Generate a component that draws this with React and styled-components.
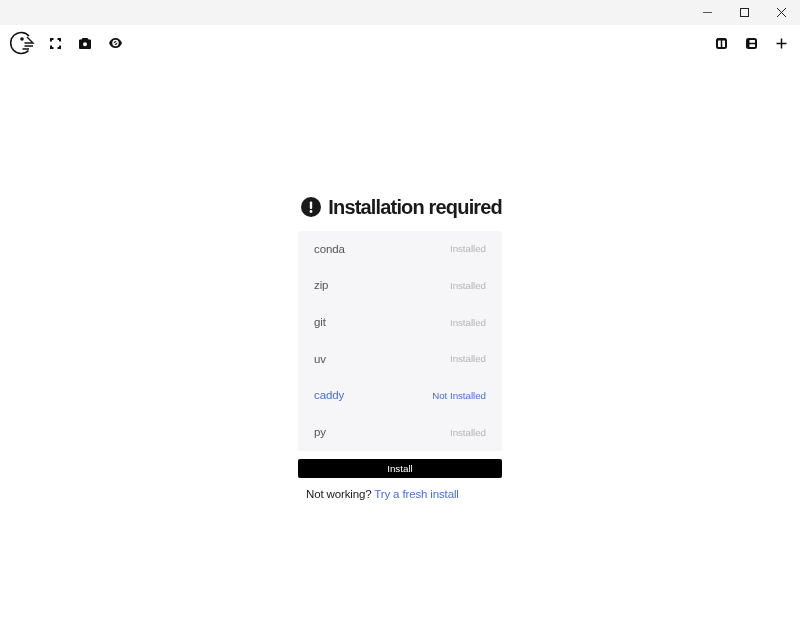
import React from 'react';
import styled, { createGlobalStyle } from 'styled-components';

const packages = [
  { name: 'conda', installed: true },
  { name: 'zip', installed: true },
  { name: 'git', installed: true },
  { name: 'uv', installed: true },
  { name: 'caddy', installed: false },
  { name: 'py', installed: true },
];

const App = () => {
  return (
    <Page>
      <GlobalStyle />
      <TitleBar>
        <WinButton>
          <svg width="10" height="10" viewBox="0 0 10 10"><path d="M0 4.500h9" stroke="#555" strokeWidth="1" /></svg>
        </WinButton>
        <WinButton>
          <svg width="10" height="10" viewBox="0 0 10 10"><rect x="0.500" y="0.500" width="8" height="8" fill="none" stroke="#222" /></svg>
        </WinButton>
        <WinButton>
          <svg width="10" height="10" viewBox="0 0 10 10"><path d="M0 0l9 9M9 0l-9 9" stroke="#222" strokeWidth="1" fill="none" /></svg>
        </WinButton>
      </TitleBar>
      <Toolbar>
        <ToolGroup>
          <Logo>
            <svg width="26" height="26" viewBox="0 0 26 26" fill="none" stroke="#111" strokeWidth="1.600">
              <path d="M19 6A10.500 10.500 0 1 0 18.500 20.500" />
              <circle cx="12" cy="9" r="1.800" fill="#111" stroke="none" />
              <path d="M17 7l6 6H14.500M14.500 16h8.500M12.500 19h6.500" strokeWidth="1.400" />
            </svg>
          </Logo>
          <ToolButton>
            <svg width="11" height="11" viewBox="0 0 11 11" fill="none" stroke="#111" strokeWidth="2">
              <path d="M1 3.500V1h2.500M7.500 1H10v2.500M10 7.500V10H7.500M3.500 10H1V7.500" />
            </svg>
          </ToolButton>
          <ToolButton>
            <svg width="12" height="11" viewBox="0 0 12 11">
              <path fillRule="evenodd" fill="#111" d="M3.500 0h5l1 1.500h1.500a1 1 0 0 1 1 1V10a1 1 0 0 1-1 1H1a1 1 0 0 1-1-1V2.500a1 1 0 0 1 1-1h1.500zM6 4.200a2 2 0 1 0 0 4 2 2 0 0 0 0-4z" />
            </svg>
          </ToolButton>
          <ToolButton>
            <svg width="13" height="10" viewBox="0 0 13 10">
              <path fillRule="evenodd" fill="#111" d="M6.500 0c3 0 5.400 2 6.500 5-1.100 3-3.500 5-6.500 5S1.100 8 0 5C1.100 2 3.500 0 6.500 0zm0 1.800a3.200 3.200 0 1 0 0 6.400 3.200 3.200 0 0 0 0-6.400z" />
              <path d="M4.700 5.500a2 2 0 0 1 3.100-2.100zM8.300 4.500a2 2 0 0 1-3.100 2.100z" fill="#111" />
            </svg>
          </ToolButton>
        </ToolGroup>
        <ToolGroup>
          <ToolButton>
            <svg width="11" height="11" viewBox="0 0 11 11" fill="none" stroke="#111">
              <rect x="1" y="1" width="9" height="9" rx="1.500" strokeWidth="2" />
              <path d="M1 1.500h9" strokeWidth="2" />
              <path d="M5.500 1v9" strokeWidth="1.500" />
            </svg>
          </ToolButton>
          <ToolButton>
            <svg width="11" height="11" viewBox="0 0 11 11" fill="none" stroke="#111">
              <rect x="1" y="1" width="9" height="9" rx="1.500" strokeWidth="2" />
              <path d="M1 5.500h9" strokeWidth="1.500" />
              <path d="M1.500 1.500h1.500v8H1.500z" fill="#111" strokeWidth="1" />
            </svg>
          </ToolButton>
          <ToolButton>
            <svg width="11" height="11" viewBox="0 0 11 11" fill="none" stroke="#111" strokeWidth="1.500">
              <path d="M5.500 0.500v10M0.500 5.500h10" />
            </svg>
          </ToolButton>
        </ToolGroup>
      </Toolbar>
      <Main>
        <Content>
          <Heading>
            <svg width="20" height="20" viewBox="0 0 20 20">
              <circle cx="10" cy="10" r="10" fill="#1a1a1a" />
              <rect x="8.800" y="4.500" width="2.400" height="7.500" rx="1" fill="#fff" />
              <circle cx="10" cy="14.500" r="1.400" fill="#fff" />
            </svg>
            Installation required
          </Heading>
          <List>
            {packages.map((pack) => (
              <Row key={pack.name} $missing={!pack.installed}>
                <PackName>{pack.name}</PackName>
                <Status>{pack.installed ? 'Installed' : 'Not Installed'}</Status>
              </Row>
            ))}
          </List>
          <InstallButton>Install</InstallButton>
          <Hint>Not working? <HintLink>Try a fresh install</HintLink></Hint>
        </Content>
      </Main>
    </Page>
  );
};

export default App;

const GlobalStyle = createGlobalStyle`
  html, body {
    margin: 0;
    padding: 0;
    background: #fff;
  }
  body {
    font-family: "Liberation Sans", Arial, sans-serif;
  }
`;

const Page = styled.div`
  width: 800px;
  height: 640px;
  display: flex;
  flex-direction: column;
  overflow: hidden;
`;

const TitleBar = styled.div`
  height: 25px;
  background: #f4f4f4;
  display: flex;
  justify-content: flex-end;
  flex-shrink: 0;
`;

const WinButton = styled.div`
  width: 37px;
  display: flex;
  align-items: center;
  justify-content: center;
`;

const Toolbar = styled.div`
  height: 36px;
  padding: 0 4px 0 10px;
  display: flex;
  align-items: center;
  justify-content: space-between;
  flex-shrink: 0;
`;

const ToolGroup = styled.div`
  display: flex;
  align-items: center;
`;

const Logo = styled.div`
  width: 30px;
  height: 30px;
  display: flex;
  align-items: center;
`;

const ToolButton = styled.div`
  width: 30px;
  height: 30px;
  display: flex;
  align-items: center;
  justify-content: center;
`;

const Main = styled.div`
  flex: 1;
  display: flex;
  justify-content: center;
  padding-top: 131px;
`;

const Content = styled.div`
  width: 204px;
  display: flex;
  flex-direction: column;
  will-change: transform;
`;

const Heading = styled.h1`
  margin: 0 0 9px;
  height: 30px;
  display: flex;
  align-items: center;
  justify-content: flex-end;
  gap: 7px;
  font-size: 20px;
  font-weight: 700;
  letter-spacing: -0.830px;
  white-space: nowrap;
  color: #1a1a1a;
`;

const List = styled.div`
  background: #f6f6f8;
  border-radius: 2px;
  padding: 0 16px;
`;

const Row = styled.div`
  height: 36.670px;
  display: flex;
  align-items: center;
  justify-content: space-between;
  color: ${(props) => (props.$missing ? '#4a6fd4' : '#555')};
  --status: ${(props) => (props.$missing ? '#4a6fd4' : '#b5b5b8')};
`;

const PackName = styled.span`
  font-size: 11.500px;
  letter-spacing: -0.100px;
  padding-bottom: 1px;
`;

const Status = styled.span`
  font-size: 9.800px;
  letter-spacing: -0.050px;
  padding-bottom: 1px;
  color: var(--status);
`;

const InstallButton = styled.button`
  margin-top: 8px;
  height: 19px;
  padding: 0;
  border: none;
  border-radius: 2px;
  background: #000;
  color: #fff;
  font-family: inherit;
  font-size: 9.800px;
`;

const Hint = styled.div`
  margin-top: 10px;
  padding-left: 8px;
  font-size: 11.500px;
  letter-spacing: -0.140px;
  color: #1a1a1a;
`;

const HintLink = styled.span`
  color: #4a6fd4;
`;
